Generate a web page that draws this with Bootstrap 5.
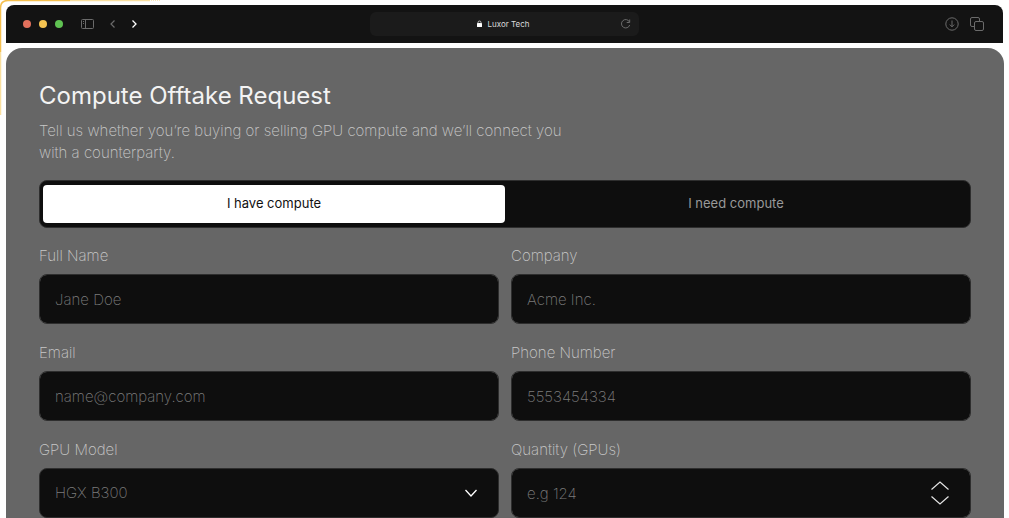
<!DOCTYPE html>
<html lang="en">
<head>
<meta charset="utf-8">
<meta name="viewport" content="width=device-width, initial-scale=1">
<title>Luxor Tech</title>
<link href="https://cdn.jsdelivr.net/npm/bootstrap@5.3.0/dist/css/bootstrap.min.css" rel="stylesheet">
<script src="https://cdn.jsdelivr.net/npm/bootstrap@5.3.0/dist/js/bootstrap.bundle.min.js" defer></script>
<style>
  body { font-family: Inter, "Liberation Sans", sans-serif; background: #fff; padding: 5px 5px 0 6px; }
  .accent-line { position: absolute; left: 0; top: 0; pointer-events: none; }
  .browser-bar { background: #131313; height: 38px; padding: 0 17px; border-radius: 8px 8px 0 0; margin: 0 1px 5px 0; }
  .bar-side { flex: 1 1 0; }
  .bar-nav { gap: 14px; margin-left: 16px; }
  .traffic { width: 8px; height: 8px; border-radius: 50%; }
  .traffic-close { background: #e2705c; }
  .traffic-min { background: #f5c451; }
  .traffic-max { background: #5fc252; }
  .bar-btn { color: #6b6b6b; line-height: 0; }
  .address { background: #1b1b1b; width: 28%; height: 24px; border-radius: 6px; padding: 0 8px; font-size: 8px; color: #dcdcdc; }
  .request-panel { background: #666; border-radius: 16px 16px 0 0; padding: 33px 33px 0; min-height: 0; }
  .request-title { font-size: 24px; line-height: 30px; font-weight: 400; color: #f3f3f3; margin-bottom: 9px; }
  .request-intro { font-size: 15px; line-height: 22px; font-weight: 200; color: #c8c8c8; max-width: 545px; margin-bottom: 16px; }
  .mode-switch { background: #0e0e0e; border: 1px solid #2e2e2e; border-radius: 8px; padding: 4px 3px; height: 48px; margin-bottom: 17px; }
  .mode-switch .btn { font-size: 13px; font-weight: 400; border: 0; border-radius: 4px; color: #999; padding: 0; }
  .mode-switch .btn.active { background: #fff; color: #111; }
  .field-grid { --bs-gutter-x: 12px; --bs-gutter-y: 18px; }
  .field-grid .form-label { display: block; font-size: 15px; line-height: 22px; font-weight: 200; color: #c8c8c8; margin-bottom: 7px; }
  .field-grid .form-control, .field-grid .form-select { height: 50px; padding: 0 15px; font-size: 15px; font-weight: 200; background-color: #0e0e0e; border: 1px solid #2e2e2e; border-radius: 8px; color: #7c7c7c; }
  .field-grid .form-control::placeholder { color: #7c7c7c; opacity: 1; }
  .field-grid .form-select { background-image: none; }
  .field-grid input[type=number] { appearance: textfield; -moz-appearance: textfield; }
  .field-icon { position: absolute; top: 0; bottom: 0; right: 21px; margin: auto 0; pointer-events: none; }
</style>
</head>
<body class="vh-100 overflow-hidden d-flex flex-column position-relative">
  <svg class="accent-line" width="164" height="118" fill="none" aria-hidden="true">
    <path d="M.5 52V8Q.5.5 8 .5H70" stroke="#f5c04f" stroke-width="1.5"/>
    <path d="M.5 52V115M70 .5H150" stroke="#fae0a0" stroke-width="1.5"/>
    <path d="M151 .5H161" stroke="#fae8b8" stroke-dasharray="1 1"/>
  </svg>

  <header class="browser-bar d-flex align-items-center flex-shrink-0">
    <div class="bar-side d-flex align-items-center">
      <div class="d-flex gap-2">
        <span class="traffic traffic-close"></span>
        <span class="traffic traffic-min"></span>
        <span class="traffic traffic-max"></span>
      </div>
      <div class="bar-nav d-flex align-items-center">
        <button type="button" class="btn bar-btn border-0 p-0" aria-label="Sidebar">
          <svg width="16" height="12" fill="none" stroke="currentColor"><rect x="2.5" y="1.5" width="12" height="9" rx="1"/><path d="M6.500 1.500V10.500M4 3.500H5M4 5.500H5"/></svg>
        </button>
        <button type="button" class="btn bar-btn border-0 p-0" aria-label="Back">
          <svg width="8" height="10" fill="none" stroke="currentColor" stroke-width="1.200"><path d="M5.500 1.500L2 5L5.500 8.500"/></svg>
        </button>
        <button type="button" class="btn bar-btn border-0 p-0 text-white" aria-label="Forward">
          <svg width="8" height="10" fill="none" stroke="currentColor" stroke-width="1.300"><path d="M1.500 1.500L5 5L1.500 8.500"/></svg>
        </button>
      </div>
    </div>
    <div class="address d-flex align-items-center">
      <div class="flex-grow-1 d-flex align-items-center justify-content-center gap-1 ps-2">
        <svg width="7" height="8" fill="none" aria-hidden="true"><rect x="1" y="3" width="5" height="4" rx=".5" fill="#fff"/><path d="M2 3.500V2.500a1.500 1.500 0 0 1 3 0V3.500" stroke="#ddd" stroke-width=".8"/></svg>
        <span>Luxor Tech</span>
      </div>
      <button type="button" class="btn bar-btn border-0 p-0" aria-label="Reload">
        <svg width="11" height="12" fill="none" stroke="currentColor"><path d="M9.500 4A4.200 4.200 0 1 0 9.700 7M9.700 1.500V4.500H6.700"/></svg>
      </button>
    </div>
    <div class="bar-side d-flex align-items-center justify-content-end gap-2">
      <button type="button" class="btn bar-btn border-0 p-0" aria-label="Downloads">
        <svg width="16" height="16" fill="none" stroke="currentColor"><circle cx="8" cy="8" r="6.200"/><path d="M8 4.500V10.800M5.800 8.600L8 10.800L10.200 8.600"/></svg>
      </button>
      <button type="button" class="btn bar-btn border-0 p-0" aria-label="Tabs">
        <svg width="18" height="16" fill="none" stroke="currentColor"><rect x="6.500" y="5.500" width="9" height="9" rx="1.500"/><path d="M6.500 10.500H4A1.500 1.500 0 0 1 2.500 9V3A1.500 1.500 0 0 1 4 1.500H10A1.500 1.500 0 0 1 11.500 3V5.500"/></svg>
      </button>
    </div>
  </header>

  <main class="request-panel flex-grow-1 overflow-hidden">
    <h1 class="request-title">Compute Offtake Request</h1>
    <p class="request-intro">Tell us whether you’re buying or selling GPU compute and we’ll connect you with a counterparty.</p>
    <div class="mode-switch d-flex" role="group" aria-label="Request type">
      <button type="button" class="btn active w-50">I have compute</button>
      <button type="button" class="btn w-50">I need compute</button>
    </div>
    <form class="row field-grid mt-0">
      <div class="col-6 mt-0">
        <label class="form-label" for="fullName">Full Name</label>
        <input class="form-control" id="fullName" type="text" placeholder="Jane Doe">
      </div>
      <div class="col-6 mt-0">
        <label class="form-label" for="company">Company</label>
        <input class="form-control" id="company" type="text" placeholder="Acme Inc.">
      </div>
      <div class="col-6">
        <label class="form-label" for="email">Email</label>
        <input class="form-control" id="email" type="email" placeholder="name@company.com">
      </div>
      <div class="col-6">
        <label class="form-label" for="phone">Phone Number</label>
        <input class="form-control" id="phone" type="tel" placeholder="5553454334">
      </div>
      <div class="col-6">
        <label class="form-label" for="model">GPU Model</label>
        <div class="position-relative">
          <select class="form-select" id="model"><option>HGX B300</option></select>
          <svg class="field-icon" width="14" height="10" fill="none" stroke="#fff" stroke-width="1.300" aria-hidden="true"><path d="M1.500 2L7 8L12.500 2"/></svg>
        </div>
      </div>
      <div class="col-6">
        <label class="form-label" for="quantity">Quantity (GPUs)</label>
        <div class="position-relative">
          <input class="form-control" id="quantity" type="number" placeholder="e.g 124">
          <svg class="field-icon" width="20" height="26" fill="none" stroke="#e4e4e4" stroke-width="1.200" aria-hidden="true"><path d="M1.500 9.500L10 2L18.500 9.500M1.500 16.500L10 24L18.500 16.500"/></svg>
        </div>
      </div>
    </form>
  </main>
</body>
</html>
